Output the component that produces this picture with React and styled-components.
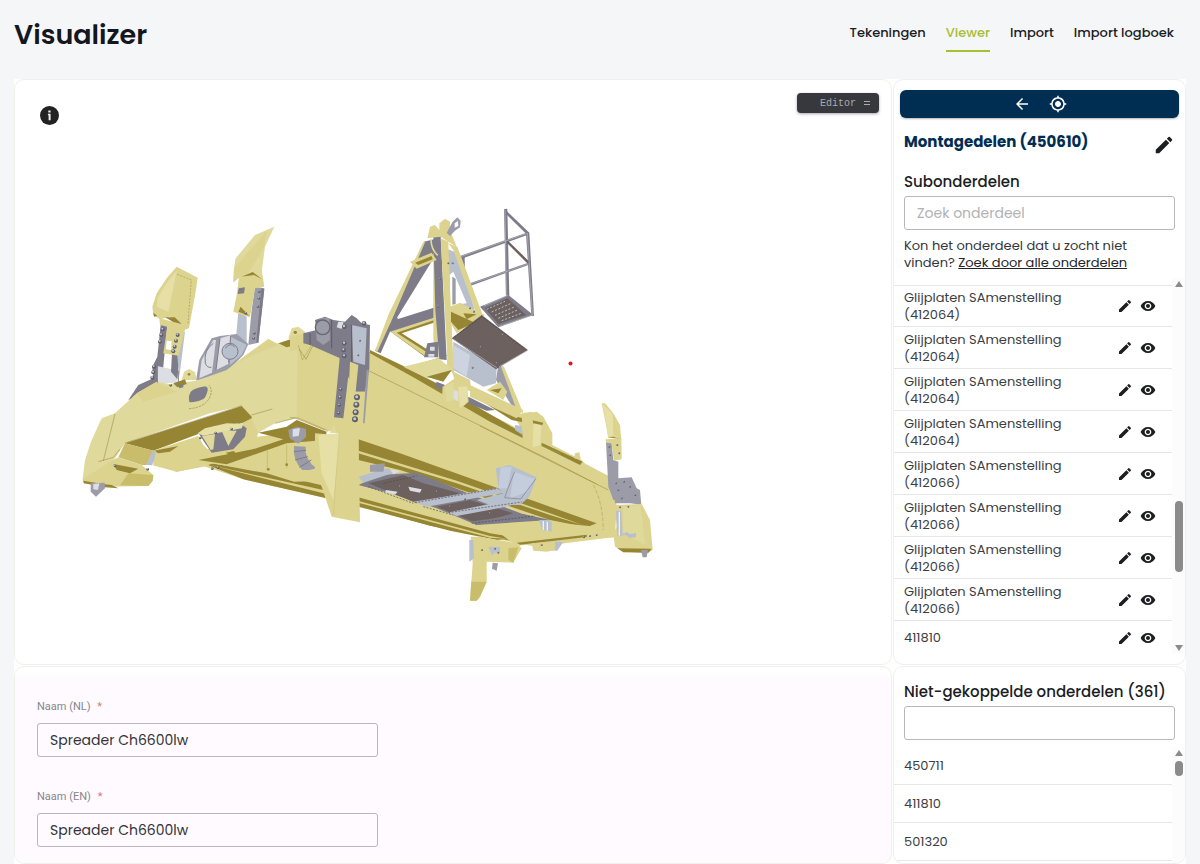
import React from "react";
import styled, { createGlobalStyle, css } from "styled-components";
import { MdArrowBack, MdEdit, MdMyLocation, MdVisibility } from "react-icons/md";

const GlobalStyle = createGlobalStyle`
  * { box-sizing: border-box; }
  body {
    margin: 0;
    background: #f5f6f8;
    color: #22242a;
    font-family: "Poppins", "Inter", sans-serif;
    font-size: 13px;
    overflow: hidden;
  }
  h1, h2, h3, p, ul { margin: 0; padding: 0; }
  ul { list-style: none; }
  button, input { font: inherit; color: inherit; }
`;

const Page = styled.div`
  height: 100vh;
  display: flex;
  flex-direction: column;
  padding: 0 14px;
`;

const Header = styled.header`
  display: flex;
  justify-content: space-between;
  align-items: flex-start;
  height: 79px;
  flex: none;
  padding: 15px 12px 0 0;
`;

const Title = styled.h1`
  font-size: 27px;
  line-height: 40px;
  font-weight: 600;
  color: #15171f;
`;

const Nav = styled.nav`
  display: flex;
  gap: 20px;
`;

const NavLink = styled.a`
  padding: 8px 0 7px;
  line-height: 20px;
  font-weight: 500;
  text-decoration: none;
  color: ${(p) => (p.$active ? "#a9bd35" : "#1b1d24")};
  border-bottom: 2px solid ${(p) => (p.$active ? "#a9bd35" : "transparent")};
`;

const Board = styled.main`
  flex: 1;
  min-height: 0;
  display: grid;
  grid-template-columns: minmax(0, 1fr) 293px;
  grid-template-rows: auto minmax(0, 1fr);
  gap: 1px;
  background: #fff;
`;

const Card = styled.section`
  min-width: 0;
  background: #fff;
  border: 1px solid #f0f0ea;
  border-radius: 10px;
  overflow: hidden;
`;

const ViewerCard = styled(Card)`
  position: relative;
`;

const Drawing = styled.svg`
  display: block;
  width: 100%;
  height: auto;
`;

const InfoButton = styled.button`
  position: absolute;
  top: 26px;
  left: 25px;
  display: flex;
  padding: 0;
  border: 0;
  background: none;
`;

const EditorButton = styled.button`
  position: absolute;
  top: 13px;
  right: 12px;
  display: flex;
  align-items: center;
  justify-content: flex-end;
  gap: 8px;
  width: 82px;
  height: 20px;
  padding: 0 9px;
  border: 0;
  border-radius: 4px;
  background: #37383e;
  color: #a9aaae;
  font-family: "Liberation Mono", monospace;
  font-size: 10px;
  box-shadow: 0 1px 3px rgba(0, 0, 0, 0.35);
`;

const SideCard = styled(Card)`
  display: flex;
  flex-direction: column;
`;

const Toolbar = styled.div`
  display: flex;
  justify-content: center;
  gap: 18px;
  align-items: center;
  height: 28px;
  flex: none;
  margin: 10px 6px 0;
  border-radius: 6px;
  background: #002d52;
  box-shadow: 0 1px 2px rgba(0, 0, 0, 0.3);
`;

const IconButton = styled.button`
  display: flex;
  padding: 0;
  border: 0;
  background: none;
  color: ${(p) => p.$color || "#1d1e22"};
  font-size: ${(p) => p.$size || 16}px;
`;

const PartHead = styled.div`
  display: flex;
  justify-content: space-between;
  padding: 12px 10px 1px;
`;

const PartTitle = styled.h2`
  font-size: 15px;
  line-height: 24px;
  font-weight: 700;
  color: #002d52;
`;

const EditSlot = styled.div`
  padding-top: 4px;
`;

const SubTitle = styled.h3`
  padding: 13px 10px 0;
  font-size: 15px;
  line-height: 24px;
  font-weight: 500;
  white-space: nowrap;
  color: #1b1d24;
`;

const field = css`
  height: 34px;
  padding: 0 12px;
  border: 1px solid #b9b7bb;
  border-radius: 3px;
  background: transparent;
  font-size: 14px;
  outline: none;
`;

const SearchInput = styled.input`
  ${field}
  flex: none;
  margin: 2px 10px 0;
  &::placeholder { color: #b2b2b4; opacity: 1; }
`;

const Hint = styled.p`
  padding: 7px 10px 0;
  line-height: 17px;
  color: #34363b;
  a { color: #22242a; }
`;

const ListArea = styled.div`
  display: flex;
  ${(p) => (p.$fill ? "flex: 1; min-height: 0; margin-top: 7px;" : "height: 376px; margin: 7px 0 10px;")}
  overflow: hidden;
`;

const List = styled.ul`
  flex: 1;
  min-width: 0;
  padding-top: ${(p) => (p.$ruled ? 7 : 0)}px;
`;

const Row = styled.li`
  display: flex;
  align-items: center;
  gap: 7px;
  height: ${(p) => p.$height}px;
  padding: 0 16px 0 10px;
  border-bottom: 1px solid #e7e7e4;
  line-height: 17px;
  color: #3c3e43;
  ${List} > &:first-child { border-top: ${(p) => (p.$ruled ? "1px solid #e7e7e4" : "0")}; }
`;

const RowName = styled.span`
  flex: 1;
  max-width: 170px;
  margin-right: auto;
`;

const Track = styled.div`
  display: flex;
  flex-direction: column;
  align-items: center;
  width: 13px;
  background: #fcfcfc;
`;

const Arrow = styled.i`
  border: 4px solid transparent;
  ${(p) =>
    p.$down
      ? "border-top: 6px solid #8b8b8b; border-bottom: 0; margin: auto 0 3px;"
      : "border-bottom: 6px solid #8b8b8b; border-top: 0; margin-top: 3px;"}
`;

const Thumb = styled.div`
  width: 8px;
  height: ${(p) => p.$height}px;
  margin-top: ${(p) => p.$offset}px;
  border-radius: 4px;
  background: #8b8b8b;
`;

const FormCard = styled(Card)`
  padding-top: 9px;
`;

const Form = styled.form`
  display: flex;
  flex-direction: column;
  gap: 32px;
  height: 100%;
  padding: 23px 22px;
  background: #fefaff;
`;

const Field = styled.label`
  display: flex;
  flex-direction: column;
  gap: 8px;
  width: 341px;
  max-width: 100%;
`;

const FieldName = styled.span`
  font-family: "Roboto", sans-serif;
  font-size: 11px;
  line-height: 16px;
  color: #88868a;
  b { margin-left: 4px; font-weight: 400; color: #e07a76; }
`;

const TextInput = styled.input`
  ${field}
  color: #333438;
`;

/* ---- Spreader model ---- */
const Y = "#dfd99b";
const YS = "#dcd48e";
const YL = "#e6e0a6";
const YM = "#c9bd6c";
const O = "#968634";
const G = "#7e7c89";
const GM = "#9b9ca8";
const GL = "#b9c0cd";
const GW = "#dcdee4";
const B = "#6c615f";

const understructure = [
  [YS, "245,315 325,290 560,230 700,215 860,250 900,330 1240,380 1440,460 1630,510 1640,530 1400,560 1320,545 1080,490 864,436 750,410 520,358 400,318 320,335"],
  [O, "390,305 560,330 765,378 864,410 1320,530 1340,545 1080,497 864,436 750,410 520,358"],
  [YS, "420,315 760,390 1180,506 1320,540 1180,513 760,400"],
  [Y, "255,312 330,290 380,305 400,318 320,335"],
];

const leftEnd = [
  [G, "175,570 205,525 250,505 275,515 200,560"],
  [G, "272,345 292,345 275,520 250,510 247,470 262,440"],
  [GW, "262,468 325,482 320,518 262,520"],
  [G, "306,430 330,430 322,508 303,485"],
  [GL, "328,370 345,365 328,500 322,440"],
  [YS, "268,325 348,345 340,380 325,437 280,430 292,350 270,345"],
  ["#fff", "290,392 305,394 303,420 288,418"],
  [YS, "320,170 383,203 378,240 357,355 340,360 312,328 300,320 270,328 250,315 247,290 260,250 290,205"],
  [YL, "320,182 295,305 260,290 264,262 295,212"],
  [YS, "326,190 367,212 352,345 335,340 298,305"],
  [O, "285,322 314,322 335,342 310,336"],
  [O, "250,308 262,318 252,320"],
  [GL, "505,305 530,320 530,410 497,395"],
  [GM, "555,230 583,235 565,398 535,405 545,300"],
  [G, "574,235 583,237 565,398 559,397"],
  [YS, "508,195 575,180 583,230 555,235 540,322 490,305 500,255"],
  [Y, "613,50 585,110 575,185 577,208 550,188 530,200 505,205 490,217 492,175 497,145 555,75"],
  [YS, "590,62 583,110 535,190 505,205 490,217 492,175"],
  [O, "515,200 548,186 577,208 552,195"],
  [G, "506,235 525,232 522,250 503,252"],
  [O, "512,290 538,318 505,305"],
  [GM, "378,512 388,450 425,385 450,378 500,372 535,402 520,435 470,485"],
  [GW, "388,505 395,450 430,390 438,390 426,488"],
  [GW, "438,480 450,385 482,376 475,462"],
  [GL, "482,380 505,392 530,404 515,435 480,465"],
  [Y, "335,510 342,485 358,477 375,487 380,510"],
  [Y, "655,385 665,355 685,350 705,365 700,405"],
  [Y, "95,625 135,610 200,550 260,515 300,522 380,512 470,480 520,440 595,387 620,400 720,400 810,445 800,670 770,660 680,625 615,640 565,668 550,672 545,625 515,588 420,610 165,700 145,730 125,760 75,800 38,808 45,750 65,690"],
  [YS, "200,550 260,515 320,545 220,575"],
  [YS, "500,460 595,387 625,405 560,430"],
  [YS, "683,410 725,405 810,445 800,670 770,660 680,625"],
  [O, "310,520 345,508 350,522 322,532"],
  [O, "625,400 670,385 702,400 650,412"],
  [G, "325,526 340,522 340,532 328,535"],
  [O, "165,700 515,588 545,620 545,635 430,650 385,672 250,722"],
  [YM, "165,700 250,722 240,765 215,765 145,742"],
  [YS, "250,722 385,678 400,705 425,730 530,705 548,718 400,770 320,785 250,762"],
  [O, "252,722 325,708 300,725 265,730"],
  [YS, "120,755 145,742 215,765 250,795 248,812 235,828 105,830 40,820 38,808"],
  [O, "130,762 205,776 180,790 140,780"],
  [O, "40,812 98,822 125,825 145,835 105,832 42,820"],
  [YM, "175,790 250,795 248,812 235,828 150,826"],
  [GM, "62,820 104,818 105,835 78,860 62,845"],
  [GW, "70,822 88,820 84,840 70,838"],
  [YS, "515,640 545,625 565,668 548,720 500,722"],
  [G, "385,668 400,662 510,640 530,655 525,680 490,718 425,728 405,700"],
  [YL, "383,670 405,655 470,640 520,642 515,655 400,677"],
  [Y, "396,678 435,672 430,718 422,720"],
  [Y, "455,662 500,662 475,708"],
  [YS, "530,700 650,660 700,690 860,670 860,810 672,815 590,790 410,757"],
  [O, "565,668 650,650 680,630 770,665 765,690 650,700 470,763 385,750 548,718 640,688"],
];

const endPost = [
  [YS, "205,440 780,600 960,700 900,740 680,748 620,742 205,625"],
  [O, "205,622 600,730 680,743 620,750 480,722 205,650"],
  [YS, "205,633 600,738 650,746 600,743 205,638"],
  [YS, "232,185 780,465 960,560 975,640 960,700 205,450 205,240"],
  [O, "205,448 330,490 780,650 920,700 890,712 780,690 500,595 330,540 205,510"],
  [YS, "205,482 500,572 780,670 880,706 780,675 500,580 205,490"],
  [YS, "0,140 45,130 65,165 0,185"],
  [GL, "240,575 280,550 380,552 530,612 500,620"],
  [G, "205,585 270,555 380,548 560,620 720,680 560,705 440,655 300,610"],
  [B, "235,580 340,555 400,580 510,610 380,640"],
  [B, "440,650 540,630 670,670 560,700"],
  [GL, "205,560 290,535 320,545 220,578"],
  [GM, "240,525 285,520 280,545 240,545"],
  [GL, "370,635 620,595 645,608 410,650"],
  [GL, "470,668 610,640 700,635 640,652 500,678"],
  [GL, "617,535 660,525 740,562 718,620 690,645 600,645 560,630 640,610 625,595"],
  ["#c3cddd", "632,532 665,530 652,595 625,595"],
  ["#c3cddd", "672,545 735,568 712,605 660,625"],
  [G, "540,695 700,672 780,690 560,705"],
  [GL, "748,690 780,690 780,730 755,720"],
  [YS, "75,430 205,440 210,697 125,680 95,590 75,545"],
  [YL, "85,435 150,430 130,630 95,550"],
  [YS, "150,430 205,445 208,695 128,675"],
  [Y, "140,380 165,385 168,425 120,430"],
  [YS, "150,200 240,185 240,450 195,445 140,430 130,390"],
  [G, "40,130 80,120 75,90 105,80 130,90 165,95 185,75 200,85 215,100 240,105 238,235 225,305 195,305 150,205 60,165 40,160"],
  [GM, "78,110 90,85 118,85 120,150 100,165 80,150"],
  [GL, "185,105 230,115 225,225 190,215"],
  [GW, "145,95 160,95 158,118 140,112"],
  [G, "155,115 185,100 180,215 160,385 132,382 148,215"],
  [YS, "180,215 205,225 197,305 228,305 220,400 200,445 170,430"],
  [GM, "230,240 237,240 224,400 219,400"],
  [O, "240,180 345,230 440,280 690,425 780,470 780,485 600,395 370,262 240,190"],
];

const tower = [
  [G, "402,28 412,26 418,290 408,290"],
  [G, "405,28 478,98 473,106 404,38"],
  [G, "468,98 478,98 492,348 484,348"],
  [G, "270,168 474,97 474,104 270,178"],
  [B, "412,120 478,185 474,192 412,130"],
  [G, "300,250 475,188 475,195 300,258"],
  [G, "275,170 284,170 286,320 277,320"],
  [G, "232,225 275,245 275,255 232,235"],
  [G, "330,320 415,285 490,345 385,382"],
  [B, "345,325 413,295 468,345 385,372"],
  [GL, "225,145 265,160 320,350 270,330 230,220"],
  [YS, "235,130 262,140 340,350 325,358 250,150"],
  ["#fff", "238,225 250,215 290,310 248,315"],
  [GM, "247,230 257,236 257,312 247,314"],
  [O, "62,395 195,350 200,365 95,400 190,460 165,470"],
  [YS, "62,395 150,365 200,350 200,358 80,398 175,460 165,468"],
  [GM, "385,495 400,500 455,635 430,625 378,540"],
  [YS, "392,497 402,500 460,640 440,630"],
  [G, "162,125 192,118 200,160 80,355 195,320 200,350 60,395 32,460 15,452 60,370"],
  [YS, "158,130 166,125 72,345 22,455 15,452 55,345"],
  ["#fff", "196,180 196,322 82,358"],
  [YS, "190,160 205,160 205,480 190,420"],
  [G, "190,110 212,105 230,480 208,478 196,330"],
  [YS, "212,115 235,125 243,340 252,520 230,505 232,470"],
  [YS, "172,115 180,80 195,75 208,90 208,70 225,56 240,65 240,90 260,140 235,125 212,110"],
  [GM, "248,65 262,52 272,62 270,82 255,92 240,108 230,98"],
  ["#fff", "254,70 264,62 265,78 254,83"],
  [YS, "120,185 185,158 200,180 140,206"],
  [O, "135,188 185,168 188,178 145,195"],
  [YS, "240,320 270,308 345,345 260,400 245,375"],
  [O, "243,335 315,368 265,390 243,365"],
  [O, "280,340 320,343 290,358"],
  [G, "172,430 205,425 205,472 162,472"],
  [GL, "250,425 380,500 378,550 340,560 250,510"],
  ["#cdd3df", "250,435 300,465 290,530 250,505"],
  [B, "335,345 474,450 378,508 245,415"],
  [Y, "100,500 205,475 250,510 235,520 170,535"],
  [O, "170,530 245,510 220,545"],
  [YS, "245,512 300,540 305,575 260,560"],
  [YS, "300,555 460,630 440,655 300,590"],
  [YS, "350,570 390,545 412,575 400,600"],
  [O, "360,570 395,565 385,580"],
  [G, "295,590 375,630 350,632 290,608"],
  [G, "200,545 225,555 220,570 195,560"],
  [YS, "218,560 255,535 290,550 296,605 270,628 215,605"],
  [Y, "225,560 250,545 255,600 230,605"],
  [YL, "265,560 292,560 292,605 270,625"],
  [GW, "252,570 265,575 265,605 250,595"],
];

const rightEnd = [
  [YS, "60,430 240,400 400,415 405,442 240,450 110,468"],
  [O, "110,458 320,434 320,441 120,464"],
  [YS, "100,75 170,65 190,80 217,130 217,165 305,210 318,225 310,232 330,262 370,280 400,300 410,345 405,440 370,420 350,280 150,160"],
  [O, "0,12 110,80 190,98 185,108 95,90 0,30"],
  [O, "185,158 308,215 300,225 185,168"],
  [O, "0,58 110,120 130,140 0,70"],
  [YS, "282,205 285,190 298,187 302,208"],
  [YS, "125,70 155,65 160,105 155,160 128,150"],
  [YL, "160,100 185,105 180,165 158,172"],
  [GL, "105,105 125,108 128,135 105,120"],
  [GL, "182,392 215,395 215,425 185,420"],
  [GL, "200,455 250,455 232,482 200,480"],
  [YS, "155,460 225,455 225,480 200,485 160,482"],
  [YS, "0,440 110,460 125,475 100,518 20,515 0,500"],
  [YM, "85,475 115,472 100,518 85,510"],
  [GM, "38,518 54,520 50,542 36,536"],
  [YS, "-28,440 5,440 20,515 20,575 0,620 -10,632 -30,632 -22,520"],
  [YM, "-26,575 20,575 0,620 -10,632 -30,632"],
  [GL, "-32,450 -20,450 -18,505 -32,515"],
  [YS, "365,40 375,40 400,70 420,105 424,150 405,140 385,145 377,100"],
  [YL, "368,42 398,72 400,138 385,140 378,95"],
  [O, "385,142 424,148 400,140"],
  [GM, "378,155 395,160 400,210 415,215 415,265 455,262 470,295 480,300 484,345 400,330 385,290"],
  [YS, "377,148 424,145 425,208 402,212 395,160 378,158"],
  [GM, "400,270 450,265 465,295 475,340 405,340"],
  [YS, "405,345 485,342 510,390 518,480 505,488 430,485 405,470 400,430 410,410"],
  [Y, "430,350 482,345 495,465 430,430"],
  [O, "412,475 515,476 505,488 430,487"],
  [GL, "408,362 424,362 428,438 412,438"],
  [GM, "483,480 504,480 500,502 488,502"],
];

function Facets({ at, shapes, children }) {
  return (
    <g transform={`translate(${at}) scale(0.33333)`}>
      {shapes.map(([fill, points], i) => (
        <polygon key={i} fill={fill} points={points} />
      ))}
      {children}
    </g>
  );
}

function Bolts({ spots, r = 6 }) {
  return spots.map(([x, y]) => (
    <g key={`${x}-${y}`}>
      <circle cx={x} cy={y} r={r} fill="#5f5e6b" />
      <circle cx={x - 1} cy={y - 2} r={r / 2} fill="#c3c8d3" />
    </g>
  ));
}

function SpreaderModel() {
  return (
    <Drawing viewBox="15 80 876 584" role="img" aria-label="Spreader Ch6600lw">
      <Facets at="70 360" shapes={understructure}>
        <g stroke="#b5a957" strokeWidth="1.5" fill="none">
          <path d="M592 230v95M650 240v90M500 300l20 5M620 185l55-15 100 45" />
        </g>
      </Facets>
      <Facets at="70 210" shapes={leftEnd}>
        <path d="M360 545q12-13 45-18 12 2 10 14-4 20-14 28-20 12-44 9-6-16 3-33z" fill={G} stroke={Y} strokeWidth="4" />
        <path d="M357 596q45-3 62-33 10-24-2-38" fill="none" stroke={O} strokeWidth="2" strokeDasharray="7 3" />
        <g fill="none" stroke="#8f803a" strokeWidth="1.5">
          <path d="M165 699L515 587M135 612L100 752M85 755l45-13 20-25M545 615l62-18M615 640l60-16 90 36M683 410l25 38 20-40" />
          <path d="M322 193l42 17-10 130" strokeDasharray="6 4" />
          <path d="M592 722v60M650 705v70" stroke="#b5a957" />
        </g>
        <g fill="none" stroke={G} strokeWidth="3">
          <path d="M430 400q-30 20-24 60 5 14 18 12M450 385l-12 95M482 378l-6 80" />
          <circle cx="480" cy="424" r="24" fill={GL} />
          <path d="M466 415q14-20 28-4M262 468v50M325 482v35" />
        </g>
        <Bolts spots={[[278, 358], [274, 375], [270, 395], [252, 470], [250, 487], [247, 503], [323, 375], [318, 392], [314, 410], [310, 424]]} />
        <Bolts r={4} spots={[[568, 245], [567, 265], [564, 290], [553, 370], [551, 385], [527, 310], [135, 768], [233, 778], [391, 684], [437, 669], [485, 657], [302, 526], [427, 776], [444, 773]]} />
        <g fill={O}>
          <circle cx="357" cy="493" r="4" /><circle cx="676" cy="367" r="5" />
          <circle cx="595" cy="778" r="4" /><circle cx="650" cy="764" r="4" />
          <path d="M467 728l25-5 5 8-18 4z" />
        </g>
        <path d="M228 765l18-40 12-4-4 25-8 20z" fill={GL} />
        <path d="M655 660l25-10 28 6v25l-23 20-26-16z" fill={GM} />
        <path d="M668 658l22-4-4 24-18 2z" fill={GW} />
        <path d="M672 708l35 2q-4 38 32 65l-20 5h-22q-30-30-25-72z" fill={GM} />
        <path d="M672 725l36-4M675 750l38-10M688 772l36-22" stroke={G} strokeWidth="3" />
      </Facets>
      <Facets at="290 290" shapes={endPost}>
        <g fill="none" stroke="#a39545" strokeWidth="2">
          <path d="M232 240L780 510L960 603M345 235l150-45" />
          <path d="M0 382l25 2 90 38M25 165l12 45 28-45" strokeWidth="1.5" />
        </g>
        <path d="M148 430l-18 245" stroke="#cfc67d" strokeWidth="2" />
        <g fill="none" stroke="#4f4a4c" strokeWidth="2" strokeDasharray="6 4">
          <path d="M235 590l135 50M375 638l245-42M475 668l220-32M280 580l100-22M545 700l190-22M400 650l90 25" />
        </g>
        <g fill={GW}>
          <path d="M288 600l35 5-8 9-30-7zM355 590l40 8-5 10-30-6zM300 538l30 5-20 10z" />
        </g>
        <path d="M674 545l-20 50-10 28 48 4 45-60" fill="none" stroke={G} strokeWidth="2" />
        <Bolts spots={[[152, 298], [150, 322], [148, 345], [146, 369]]} r={5} />
        <Bolts spots={[[201, 322], [199, 344], [197, 367], [195, 388]]} r={9} />
        <Bolts spots={[[163, 110], [163, 160], [161, 180], [163, 198], [222, 100]]} r={7} />
        <Bolts spots={[[210, 152], [205, 196], [330, 590], [440, 605], [525, 628], [480, 650], [600, 670]]} r={3} />
        <circle cx="98" cy="112" r="22" fill="none" stroke="#67656f" strokeWidth="4" />
        <path d="M125 90v85M185 105v110M60 130v35" stroke="#5e5c68" strokeWidth="3" />
      </Facets>
      <Facets at="480 390" shapes={rightEnd}>
        <path d="M340 285q28 50 30 135" fill="none" stroke="#b0a352" strokeWidth="2" strokeDasharray="12 5" />
        <path d="M183 165l60 27M0 108L385 300" fill="none" stroke="#a39545" strokeWidth="2" />
        <path d="M425 435l15-10 10 8 18-5v14l-20 2-10-8z" fill={GL} />
        <path d="M25 470h35v18H42l-5 10z" fill={GL} />
        <Bolts r={3} spots={[[388, 170], [390, 195], [412, 165], [418, 190], [408, 280], [415, 300], [432, 275], [450, 290], [466, 315], [425, 325], [445, 350], [420, 352], [312, 442], [330, 438], [350, 435], [45, 476], [55, 488], [6, 480], [185, 465]]} />
        <path d="M190 393v27M202 395v27M418 365v72" stroke="#f0f1f5" strokeWidth="4" />
      </Facets>
      <Facets at="370 200" shapes={tower}>
        <g fill="none" stroke={GL} strokeWidth="3" strokeDasharray="6 5">
          <path d="M350 328l55-24M365 336l56-25M375 346l58-25M385 355l60-26M395 362l58-22" />
        </g>
        <g fill="none" stroke="#b9bbc4" strokeWidth="2">
          <path d="M405 30l4 258M472 100l15 245M272 170l200-70M302 252l172-60M342 318l72-32M385 380l103-35M387 500l85-48M250 418l130 85" />
          <path d="M252 412l84-62 130 98" stroke="#454045" strokeDasharray="7 4" />
        </g>
        <path d="M183 118q0 30 20 48" fill="none" stroke={Y} strokeWidth="5" />
        <Bolts r={3} spots={[[210, 238], [205, 320], [235, 190], [248, 190], [332, 442], [308, 503], [380, 490], [398, 405], [300, 325], [312, 335]]} />
        <path d="M180 440h14v12h-14zM175 462h18v8h-18z" fill={GW} />
      </Facets>
      <circle cx="570.5" cy="363.5" r="2" fill="#e3131b" />
    </Drawing>
  );
}

const navItems = ["Tekeningen", "Viewer", "Import", "Import logboek"];
const parts = [
  ...Array(4).fill("Glijplaten SAmenstelling (412064)"),
  ...Array(4).fill("Glijplaten SAmenstelling (412066)"),
  "411810",
];
const unlinked = ["450711", "411810", "501320"];

export default function App() {
  return (
    <Page>
      <GlobalStyle />
      <Header>
        <Title>Visualizer</Title>
        <Nav>
          {navItems.map((item) => (
            <NavLink key={item} href="#" $active={item === "Viewer"}>{item}</NavLink>
          ))}
        </Nav>
      </Header>
      <Board>
        <ViewerCard>
          <SpreaderModel />
          <InfoButton type="button" aria-label="Info">
            <svg width="19" height="19" viewBox="0 0 19 19" aria-hidden="true">
              <circle cx="9.5" cy="9.5" r="9.5" fill="#222" />
              <path d="M8.3 4.6h2.3v2H8.3zM7.9 7.8h2.7v6.4H8.6V9.2h-.7z" fill="#eee" />
            </svg>
          </InfoButton>
          <EditorButton type="button">
            Editor
            <svg width="6" height="6" viewBox="0 0 6 6" aria-hidden="true">
              <path d="M0 1.5h6M0 4.5h6" stroke="currentColor" />
            </svg>
          </EditorButton>
        </ViewerCard>

        <SideCard>
          <Toolbar>
            <IconButton type="button" aria-label="Terug" $color="#fff" $size={18}><MdArrowBack /></IconButton>
            <IconButton type="button" aria-label="Centreren" $color="#fff" $size={18}><MdMyLocation /></IconButton>
          </Toolbar>
          <PartHead>
            <PartTitle>Montagedelen (450610)</PartTitle>
            <EditSlot>
              <IconButton type="button" aria-label="Bewerken" $size={22}><MdEdit /></IconButton>
            </EditSlot>
          </PartHead>
          <SubTitle>
            <label htmlFor="part-search">Subonderdelen</label>
          </SubTitle>
          <SearchInput id="part-search" placeholder="Zoek onderdeel" />
          <Hint>
            Kon het onderdeel dat u zocht niet vinden? <a href="#">Zoek door alle onderdelen</a>
          </Hint>
          <ListArea>
            <List $ruled>
              {parts.map((name, i) => (
                <Row key={i} $ruled $height={name.length > 10 ? 42 : 34}>
                  <RowName>{name}</RowName>
                  <IconButton type="button" aria-label="Bewerken"><MdEdit /></IconButton>
                  <IconButton type="button" aria-label="Tonen"><MdVisibility /></IconButton>
                </Row>
              ))}
            </List>
            <Track>
              <Arrow />
              <Thumb $offset={214} $height={71} />
              <Arrow $down />
            </Track>
          </ListArea>
        </SideCard>

        <FormCard>
          <Form>
            <Field>
              <FieldName>Naam (NL) <b>*</b></FieldName>
              <TextInput defaultValue="Spreader Ch6600lw" />
            </Field>
            <Field>
              <FieldName>Naam (EN) <b>*</b></FieldName>
              <TextInput defaultValue="Spreader Ch6600lw" />
            </Field>
          </Form>
        </FormCard>

        <SideCard>
          <SubTitle>
            <label htmlFor="unlinked-search">Niet-gekoppelde onderdelen (361)</label>
          </SubTitle>
          <SearchInput id="unlinked-search" />
          <ListArea $fill>
            <List>
              {unlinked.map((name) => (
                <Row key={name} $height={38}><RowName>{name}</RowName></Row>
              ))}
            </List>
            <Track>
              <Arrow />
              <Thumb $offset={5} $height={15} />
            </Track>
          </ListArea>
        </SideCard>
      </Board>
    </Page>
  );
}
